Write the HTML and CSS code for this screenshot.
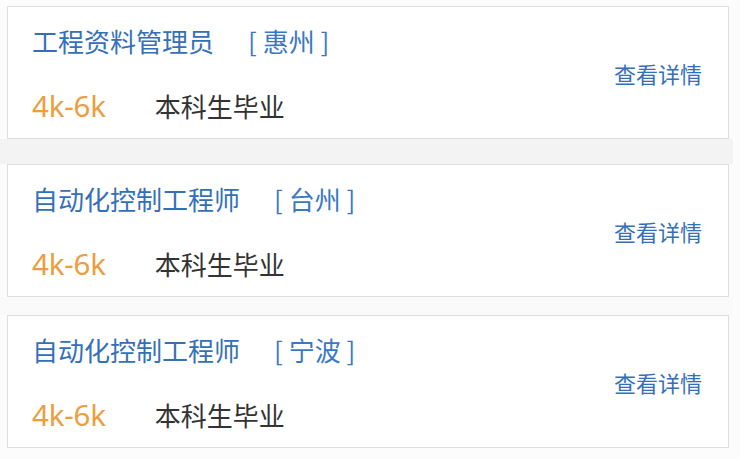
FILE: index.html
```html
<!DOCTYPE html>
<html lang="zh-CN">
<head>
<meta charset="utf-8">
<title>职位列表</title>
<link rel="stylesheet" href="styles.css">
</head>
<body>
<div class="list">
  <div class="card first">
    <div class="info">
      <div class="title-row"><span class="title">工程资料管理员</span><span class="city">[ 惠州 ]</span></div>
      <div class="meta-row"><span class="salary">4k-6k</span><span class="degree">本科生毕业</span></div>
    </div>
    <a class="detail">查看详情</a>
  </div>
  <div class="band"></div>
  <div class="card">
    <div class="info">
      <div class="title-row"><span class="title">自动化控制工程师</span><span class="city">[ 台州 ]</span></div>
      <div class="meta-row"><span class="salary">4k-6k</span><span class="degree">本科生毕业</span></div>
    </div>
    <a class="detail">查看详情</a>
  </div>
  <div class="gap"></div>
  <div class="card">
    <div class="info">
      <div class="title-row"><span class="title">自动化控制工程师</span><span class="city">[ 宁波 ]</span></div>
      <div class="meta-row"><span class="salary">4k-6k</span><span class="degree">本科生毕业</span></div>
    </div>
    <a class="detail">查看详情</a>
  </div>
</div>
</body>
</html>
```
FILE: styles.css
```css
html, body {
  margin: 0;
  padding: 0;
  background: #fcfcfc;
}
body {
  font-family: "Noto Sans", "Noto Sans CJK SC", sans-serif;
}
.list {
  padding-top: 6px;
  width: 733px;
}
.card {
  margin-left: 7px;
  width: 720px;
  height: 131px;
  border: 1px solid #dedede;
  background: #fff;
  display: flex;
  align-items: center;
  justify-content: space-between;
  box-sizing: content-box;
}
.info {
  align-self: stretch;
  padding-left: 24px;
  padding-top: 19px;
}
.title-row {
  height: 30px;
  line-height: 30px;
  font-family: "Noto Sans CJK SC", sans-serif;
  font-size: 26px;
  color: #3470b8;
  white-space: nowrap;
}
.city {
  margin-left: 34px;
  color: #3a78c4;
}
.meta-row {
  margin-top: 33px;
  height: 34px;
  line-height: 34px;
  white-space: nowrap;
}
.salary {
  font-family: "Noto Sans", sans-serif;
  font-size: 29.5px;
  color: #ee9d3e;
  letter-spacing: -0.2px;
}
.degree {
  margin-left: 49px;
  font-family: "Noto Sans CJK SC", sans-serif;
  font-size: 26px;
  color: #333;
}
.detail {
  margin-right: 26px;
  font-family: "Noto Sans CJK SC", sans-serif;
  font-size: 22px;
  color: #3470b8;
  cursor: pointer;
}
.band {
  height: 25px;
  background: #f3f3f3;
}
.gap {
  height: 18px;
  background: #fafafa;
}
```
